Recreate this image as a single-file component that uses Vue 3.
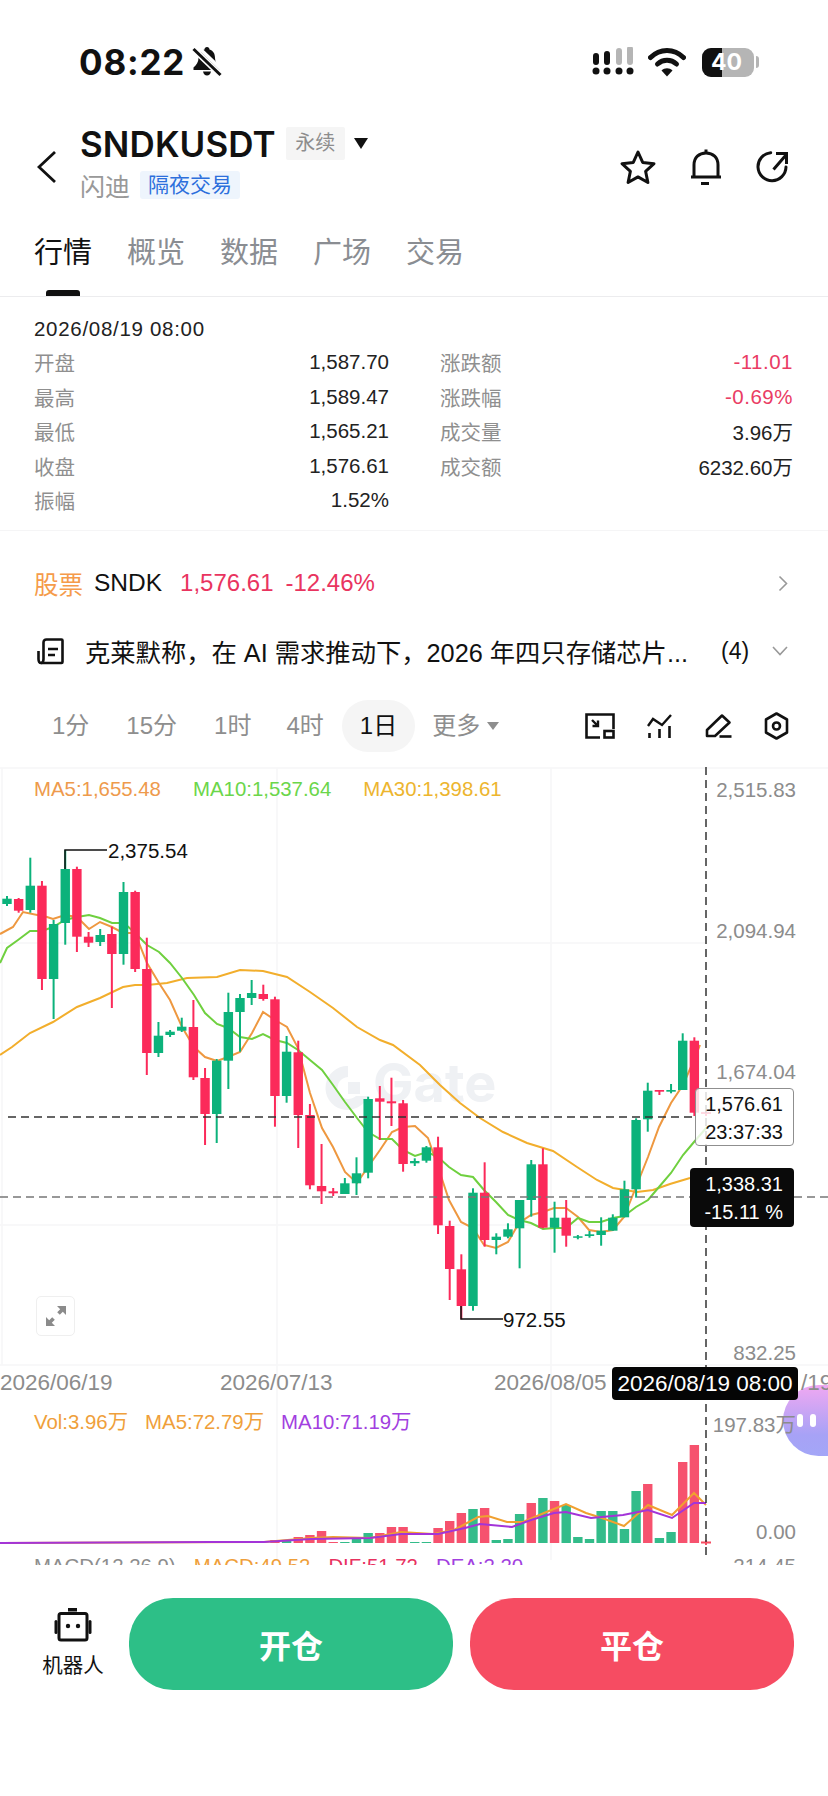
<template>
  <div class="page">
    <!-- status bar -->
    <div class="status-bar">
      <span class="clock">08:22</span>
      <svg class="mute" width="30" height="30" viewBox="0 0 30 30">
        <path d="M15 0c1.500 0 2.500 1 2.500 2.500 4 1.200 5.500 4.500 5.500 8.500 0 4 2 7 5 9.500v2.500H1.500v-2.500c3-2.500 5-5.500 5-9.500 0-4.500 2-7.500 6-8.500C12.500 1 13.500 0 15 0z" fill="#111"/>
        <path d="M11 24.500h8c-.5 2.500-2 4-4 4s-3.500-1.500-4-4z" fill="#111"/>
        <path d="M5 -1l26 25" stroke="#fff" stroke-width="3.500"/>
        <path d="M1.500 2l27 26" stroke="#fff" stroke-width="6"/>
        <path d="M1.500 2l27 26" stroke="#111" stroke-width="3"/>
      </svg>
      <div class="status-right">
        <svg width="44" height="30" viewBox="0 0 44 30">
          <path d="M5 9v6M16 7v8" stroke="#111" stroke-width="6" stroke-linecap="round"/>
          <path d="M28 4v11M39 2v13" stroke="#b5b5b5" stroke-width="6" stroke-linecap="round"/>
          <circle cx="5" cy="24" r="3.500" fill="#111"/><circle cx="16" cy="24" r="3.500" fill="#111"/>
          <circle cx="28" cy="24" r="3.500" fill="#111"/><circle cx="39" cy="24" r="3.500" fill="#111"/>
        </svg>
        <svg width="38" height="30" viewBox="0 0 38 30">
          <path d="M2.500 10.500C12 1 26 1 35.500 10.500" fill="none" stroke="#111" stroke-width="5" stroke-linecap="round"/>
          <path d="M9.500 17c5.500-5 13.500-5 19 0" fill="none" stroke="#111" stroke-width="5" stroke-linecap="round"/>
          <path d="M13.500 23.500c3-3 8-3 11 0L19 29.500z" fill="#111"/>
        </svg>
        <div class="battery">
          <div class="battery-body">
            <div class="battery-fill"></div>
            <span class="battery-num">40</span>
          </div>
          <div class="battery-nub"></div>
        </div>
      </div>
    </div>

    <!-- header -->
    <div class="header">
      <svg class="back" width="20" height="34" viewBox="0 0 20 34">
        <path d="M18 2L2 17l16 15" fill="none" stroke="#111" stroke-width="2.800"/>
      </svg>
      <div class="title-block">
        <div class="title-row">
          <span class="symbol">SNDKUSDT</span>
          <span class="perp-tag">永续</span>
          <span class="caret"></span>
        </div>
        <div class="sub-row">
          <span class="name">闪迪</span>
          <span class="night-tag">隔夜交易</span>
        </div>
      </div>
      <div class="header-icons">
        <svg width="38" height="36" viewBox="0 0 38 36">
          <path d="M19 3l4.700 10.400 11.300 1.300-8.400 7.600 2.300 11.200L19 27.900 9.100 33.500l2.300-11.200L3 14.700l11.300-1.300z" fill="none" stroke="#111" stroke-width="3" stroke-linejoin="round"/>
        </svg>
        <svg width="32" height="38" viewBox="0 0 32 38">
          <path d="M4 29V17C4 9.500 9 5 16 5s12 4.500 12 12v12" fill="none" stroke="#111" stroke-width="3"/>
          <path d="M16 1.500V5M1 29h30M11 35.500h8" stroke="#111" stroke-width="3"/>
        </svg>
        <svg width="34" height="34" viewBox="0 0 34 34">
          <path d="M15.700 2.700A14 14 0 1 0 31 17" fill="none" stroke="#111" stroke-width="3" stroke-linecap="round"/>
          <path d="M18.500 19.500L31 5M21 3.500h10.500V14" fill="none" stroke="#111" stroke-width="3"/>
        </svg>
      </div>
    </div>

    <!-- tabs -->
    <div class="tabs">
      <span v-for="(t, i) in tabs" :key="t" class="tab" :class="{ active: i === 0 }">{{ t }}</span>
    </div>

    <!-- OHLC info -->
    <div class="quote-info">
      <div class="quote-date">2026/08/19 08:00</div>
      <div class="quote-grid">
        <div v-for="row in quoteRows" :key="row.label" class="quote-cell" :class="{ 'is-right': row.right }">
          <span class="quote-label">{{ row.label }}</span>
          <span class="quote-value" :class="{ down: row.down }">{{ row.value }}</span>
        </div>
      </div>
    </div>

    <div class="stock-row">
      <span class="stock-tag">股票</span>
      <span class="stock-code">SNDK</span>
      <span class="stock-num">1,576.61</span>
      <span class="stock-num">-12.46%</span>
      <svg class="stock-arrow" width="10" height="17" viewBox="0 0 10 17">
        <path d="M1.500 1.500l7 7-7 7" fill="none" stroke="#999" stroke-width="1.600"/>
      </svg>
    </div>

    <div class="news-row">
      <svg width="28" height="27" viewBox="0 0 28 27">
        <path d="M6.500 21V4.500c0-1.500 1-3 3-3h15c.5 0 1 .5 1 1V24c0 .5-.5 1-1 1H4" fill="none" stroke="#111" stroke-width="2.600"/>
        <path d="M6.500 21c0 2.500-1 4-2.500 4s-2.500-1.500-2.500-4v-8" fill="none" stroke="#111" stroke-width="2.600"/>
        <path d="M11 11h10M11 17h7" stroke="#111" stroke-width="2.400"/>
      </svg>
      <span class="news-text">克莱默称，在 AI 需求推动下，2026 年四只存储芯片...</span>
      <span class="news-count">(4)</span>
      <svg width="16" height="10" viewBox="0 0 16 10">
        <path d="M1 1l7 7.500L15 1" fill="none" stroke="#999" stroke-width="1.600"/>
      </svg>
    </div>

    <div class="period-row">
      <div class="periods">
        <span v-for="p in periods" :key="p" class="period" :class="{ active: p === '1日' }">{{ p }}</span>
        <span class="period more">更多<i class="more-caret"></i></span>
      </div>
      <div class="tool-icons">
        <svg width="30" height="26" viewBox="0 0 30 26">
          <path d="M28.500 16V1.500H1.500v23H15" fill="none" stroke="#111" stroke-width="2.600"/>
          <rect x="19.500" y="18" width="9" height="6.500" fill="none" stroke="#111" stroke-width="2.600"/>
          <path d="M7 7l6 6M13 7.500V13H7.500" fill="none" stroke="#111" stroke-width="2.400"/>
        </svg>
        <svg width="26" height="26" viewBox="0 0 26 26">
          <path d="M1 13l5-7 9 6 9-10" fill="none" stroke="#111" stroke-width="2.400"/>
          <path d="M2.500 20v5M12.500 16v9M22.500 13v12" fill="none" stroke="#111" stroke-width="2.600"/>
        </svg>
        <svg width="27" height="27" viewBox="0 0 27 27">
          <path d="M2 23v-6L17 2.500l7.500 7L10 23z" fill="none" stroke="#111" stroke-width="2.600" stroke-linejoin="round"/>
          <path d="M14.500 23.500h12" stroke="#111" stroke-width="2.600"/>
        </svg>
        <svg width="25" height="28" viewBox="0 0 25 28">
          <path d="M12.500 1.500l10.500 6v13l-10.500 6-10.500-6v-13z" fill="none" stroke="#111" stroke-width="2.600" stroke-linejoin="round"/>
          <circle cx="12.500" cy="14" r="3.500" fill="none" stroke="#111" stroke-width="2.600"/>
        </svg>
      </div>
    </div>

    <!-- chart -->
    <div class="chart">
      <svg class="chart-canvas" width="828" height="798" viewBox="0 767 828 798">
        <g stroke="#f6f6f7" stroke-width="1.500">
          <path d="M0 768H828M0 943H706M0 1225H706M0 1365H828"/>
          <path d="M2 768V1365M277 768V1560M551 768V1560"/>
        </g>

        <!-- watermark -->
        <g fill="#eff1f4">
          <text x="373" y="1102" font-family="Inter, sans-serif" font-weight="700" font-size="54">Gate</text>
          <path d="M348 1066a22 22 0 1 0 20 30h-12a11 11 0 1 1-8-19z"/>
          <rect x="348" y="1082" width="12" height="12"/>
        </g>

        <polyline :points="ma30" fill="none" stroke="#f2ae2c" stroke-width="2"/>
        <polyline :points="ma5" fill="none" stroke="#ee9840" stroke-width="2"/>
        <polyline :points="ma10" fill="none" stroke="#6fd03f" stroke-width="2"/>

        <g v-for="c in candles" :key="c.x" :fill="c.color">
          <rect :x="c.x - 1" :y="c.wt" width="2" :height="c.wb - c.wt"/>
          <rect :x="c.x - 4.700" :y="c.bt" width="9.400" :height="Math.max(c.bb - c.bt, 1.500)"/>
        </g>
        <path d="M701 1113h10M706 1110v6" stroke="#fb2a5a" stroke-width="2"/>

        <g stroke="#111" stroke-width="1.500" fill="none">
          <path d="M65 869V850H107"/>
          <path d="M461 1306V1319H503"/>
        </g>
        <text x="108" y="858" class="extreme">2,375.54</text>
        <text x="503" y="1327" class="extreme">972.55</text>

        <path d="M8 1117H695" stroke="#333" stroke-width="1.500" stroke-dasharray="8 5"/>
        <path d="M0 1197H690M794 1197H828" stroke="#777" stroke-width="1.500" stroke-dasharray="8 5"/>

        <!-- volume -->
        <rect v-for="b in volBars" :key="'v' + b.x" :x="b.x - 4.700" :y="b.top" width="9.400" :height="1543 - b.top" :fill="b.color"/>
        <path d="M701 1542.500h10M706 1540v5" stroke="#f64c61" stroke-width="2"/>
        <polyline :points="volMa5" fill="none" stroke="#f0a030" stroke-width="2"/>
        <polyline :points="volMa10" fill="none" stroke="#a334d8" stroke-width="2"/>

        <path d="M706 767V1558" stroke="#333" stroke-width="1.500" stroke-dasharray="8 5"/>
      </svg>

      <div class="ma-legend">
        <span class="c-ma5">MA5:1,655.48</span>
        <span class="c-ma10">MA10:1,537.64</span>
        <span class="c-ma30">MA30:1,398.61</span>
      </div>

      <div class="float-ball">
        <i></i><i></i>
      </div>

      <span v-for="a in axisLabels" :key="a.text" class="axis-label" :style="{ top: a.y - 767 + 'px' }">{{ a.text }}</span>
      <span v-for="d in dateLabels" :key="d.text" class="date-label" :style="{ left: d.x + 'px' }">{{ d.text }}</span>

      <div class="price-tag">
        <div>1,576.61</div>
        <div>23:37:33</div>
      </div>
      <div class="cross-tag">
        <div>1,338.31</div>
        <div>-15.11 %</div>
      </div>

      <div class="expand-btn">
        <svg width="22" height="22" viewBox="0 0 22 22">
          <path d="M12 1h9v9l-3.200-3.200-3 3-2.600-2.600 3-3zM10 21H1v-9l3.200 3.200 3-3 2.600 2.600-3 3z" fill="#8b8b8b"/>
        </svg>
      </div>

      <div class="date-tag">2026/08/19 08:00</div>

      <div class="vol-legend">
        <span class="c-vol">Vol:3.96万</span>
        <span class="c-vol">MA5:72.79万</span>
        <span class="c-vol10">MA10:71.19万</span>
      </div>
      <div class="macd-legend">
        <span class="c-gray">MACD(12,26,9)</span>
        <span class="c-vol">MACD:49.52</span>
        <span class="c-dif">DIF:51.72</span>
        <span class="c-vol10">DEA:2.20</span>
      </div>
    </div>

    <!-- bottom actions -->
    <div class="actions">
      <div class="robot">
        <svg width="38" height="34" viewBox="0 0 38 34">
          <rect x="14" y="0" width="9" height="3.500" fill="#111"/>
          <rect x="5" y="5.500" width="28" height="26.500" rx="2" fill="none" stroke="#111" stroke-width="3"/>
          <rect x="0.500" y="12" width="3" height="14" rx="1.500" fill="#111"/>
          <rect x="34.500" y="12" width="3" height="14" rx="1.500" fill="#111"/>
          <circle cx="14" cy="18" r="2.200" fill="#111"/><circle cx="24" cy="18" r="2.200" fill="#111"/>
        </svg>
        <span>机器人</span>
      </div>
      <button class="act-btn open">开仓</button>
      <button class="act-btn close">平仓</button>
    </div>
  </div>
</template>

<script setup>
const tabs = ['行情', '概览', '数据', '广场', '交易']
const periods = ['1分', '15分', '1时', '4时', '1日']

const quoteRows = [
  { label: '开盘', value: '1,587.70' },
  { label: '涨跌额', value: '-11.01', down: true, right: true },
  { label: '最高', value: '1,589.47' },
  { label: '涨跌幅', value: '-0.69%', down: true, right: true },
  { label: '最低', value: '1,565.21' },
  { label: '成交量', value: '3.96万', right: true },
  { label: '收盘', value: '1,576.61' },
  { label: '成交额', value: '6232.60万', right: true },
  { label: '振幅', value: '1.52%' }
]

const axisLabels = [
  { text: '2,515.83', y: 790 },
  { text: '2,094.94', y: 931 },
  { text: '1,674.04', y: 1072 },
  { text: '832.25', y: 1353 },
  { text: '197.83万', y: 1423 },
  { text: '0.00', y: 1532 },
  { text: '214.45', y: 1566 }
]

const dateLabels = [
  { text: '2026/06/19', x: 0 },
  { text: '2026/07/13', x: 220 },
  { text: '2026/08/05', x: 494 },
  { text: '/19', x: 801 }
]

const RED = '#fb2a5a'
const GREEN = '#0cb27b'

// wick top, body top, body bottom, wick bottom, colour (page y values)
const rawCandles = [
  [896, 898.7, 904, 906, 'g'], [898, 899, 910.7, 912.7, 'r'], [857.7, 885.7, 910, 912.7, 'g'],
  [881, 885.7, 979, 990, 'r'], [920, 924, 979, 1019, 'g'], [850, 869, 923, 944.7, 'g'],
  [866.7, 869, 936.7, 952, 'r'], [932, 936.7, 942.7, 947, 'r'], [929, 935, 942, 946, 'g'],
  [926.7, 934, 954, 1008, 'r'], [882, 892, 954, 964.7, 'g'], [890.7, 892, 969, 972, 'r'],
  [937.7, 969, 1053, 1075, 'r'], [1022, 1035.7, 1053, 1057, 'g'], [1030, 1031.7, 1035, 1037, 'g'],
  [1017.7, 1026.7, 1030.7, 1032, 'g'], [1000, 1027, 1077.3, 1080, 'r'], [1068, 1078, 1114, 1145, 'r'],
  [1059, 1060.7, 1114, 1143, 'g'], [992.7, 1012, 1060.7, 1089, 'g'], [994, 998, 1012, 1051.7, 'g'],
  [980, 993, 998, 1005, 'g'], [984.7, 994, 999, 1000.7, 'r'], [996.7, 999.3, 1096, 1126.7, 'r'],
  [1036, 1051.7, 1096, 1102.7, 'g'], [1040.7, 1052.3, 1115, 1148, 'r'], [1104, 1115, 1185.3, 1189.3, 'r'],
  [1144, 1186, 1191.3, 1204, 'r'], [1188, 1191.3, 1193.3, 1196, 'r'], [1178, 1183.3, 1194, 1194, 'g'],
  [1157.3, 1173.3, 1183.3, 1195, 'g'], [1096.7, 1099, 1172.7, 1178.3, 'g'], [1086, 1098.3, 1101.7, 1140, 'r'],
  [1077.7, 1101.3, 1103.3, 1126, 'r'], [1100, 1103.3, 1164, 1171.7, 'r'], [1158.3, 1161, 1163.3, 1166, 'g'],
  [1146, 1147.3, 1160.7, 1162.7, 'g'], [1136.7, 1147.3, 1225.3, 1234, 'r'], [1220.7, 1226, 1269, 1300, 'r'],
  [1254.3, 1269.3, 1306, 1319.3, 'r'], [1188.3, 1192.7, 1306, 1310.7, 'g'], [1162.3, 1192.7, 1240, 1246.7, 'r'],
  [1233.3, 1236.7, 1240, 1254.3, 'g'], [1223.3, 1229.3, 1236.7, 1238.3, 'g'], [1200, 1200, 1228.3, 1268.3, 'g'],
  [1160, 1164.3, 1200, 1216.7, 'g'], [1148.3, 1164.3, 1227.7, 1228.3, 'r'], [1201.7, 1217.7, 1227.7, 1252.7, 'g'],
  [1200, 1217.7, 1235.7, 1246.7, 'r'], [1235, 1236.3, 1237.7, 1239.3, 'g'], [1231, 1234.3, 1236, 1237.7, 'g'],
  [1217.3, 1230.7, 1235, 1245.7, 'g'], [1214.3, 1217.7, 1230.7, 1230.7, 'g'], [1180.7, 1189.3, 1217.3, 1217.3, 'g'],
  [1118.3, 1120, 1189.3, 1197.7, 'g'], [1082.7, 1090.7, 1119.3, 1131.7, 'g'], [1090, 1090, 1091.7, 1095, 'r'],
  [1084, 1090, 1091.7, 1093.3, 'g'], [1033.3, 1040.7, 1090, 1090, 'g'], [1037.3, 1040.7, 1112.7, 1116, 'r']
]

const xAt = i => 7 + i * 11.65

const candles = rawCandles.map((c, i) => ({
  x: xAt(i), wt: c[0], bt: c[1], bb: c[2], wb: c[3],
  color: c[4] === 'r' ? RED : GREEN
}))

// bar top by candle index, starting at index 23
const volTops = [
  1540, 1541, 1537, 1535, 1531, 1542, 1542, 1538, 1533, 1533, 1527, 1527, 1542, 1542, 1528, 1521, 1513, 1509, 1508,
  1540, 1539, 1514, 1503, 1498, 1501, 1505, 1537, 1539, 1511, 1511, 1529, 1491, 1484, 1538, 1532, 1462, 1445
]
const volColors = 'rgrrrrgggrrrggrrrgrgggrgrgggggggrggr'.padEnd(37, 'r')
const volBars = volTops.map((top, i) => ({
  x: xAt(i + 23),
  top,
  color: volColors[i] === 'r' ? '#f6526e' : '#33bc8a'
}))

const ma5 = '0,934 13,927 23,912 47,917 53,919 65,915 77,917 89,929 100,922 112,927 123,933 135,933 147,963 159,983 170,1000 182,1027 194,1047 205,1057 217,1061 228,1057 240,1052 252,1033 263,1012 275,1020 287,1027 298,1048 302,1063 310,1093 322,1128 333,1147 345,1172 357,1183 368,1167 380,1150 392,1132 403,1127 415,1126 428,1138 438,1167 449,1200 461,1222 473,1228 484,1245 496,1248 508,1242 519,1223 531,1215 543,1212 554,1208 566,1208 578,1217 589,1230 601,1232 613,1230 624,1217 636,1187 648,1157 659,1127 671,1103 683,1085 694,1060 700,1045'
const ma10 = '0,963 7,948 18,940 30,931 42,931 53,927 65,920 77,917 89,915 100,918 112,923 124,923 135,933 147,945 159,952 170,963 182,978 194,995 205,1013 217,1024 228,1028 240,1037 252,1039 263,1034 275,1040 287,1043 298,1050 310,1060 322,1070 333,1085 345,1102 357,1118 368,1132 380,1139 392,1139 403,1150 415,1156 427,1152 438,1157 449,1167 461,1175 473,1177 484,1190 496,1202 508,1215 519,1220 531,1223 543,1229 554,1228 566,1228 578,1218 589,1222 601,1222 613,1218 624,1216 636,1207 648,1200 659,1187 671,1173 683,1155 694,1142 707,1127'
const ma30 = '0,1055 12,1047 30,1033 53,1022 77,1007 100,998 123,987 135,985 147,985 167,983 187,978 217,977 240,970 263,971 287,977 310,992 333,1008 357,1027 380,1040 393,1045 420,1065 440,1085 460,1103 480,1118 503,1132 527,1143 553,1151 577,1167 597,1180 613,1188 637,1192 653,1190 670,1184 690,1178 706,1172'
const volMa5 = '0,1543 264,1542 311,1538 333,1537 370,1538 401,1532 433,1534 454,1530 478,1517 488,1516 507,1522 523,1522 544,1513 566,1504 586,1513 602,1518 624,1526 648,1505 672,1515 694,1493 706,1505'
const volMa10 = '0,1543 211,1542 264,1542 311,1539 370,1538 401,1534 438,1534 465,1528 480,1524 512,1527 531,1520 554,1513 566,1512 591,1518 623,1515 648,1510 672,1518 694,1503 706,1503'
</script>

<style>
html, body { margin: 0; background: #fff; }
</style>

<style scoped>
.page {
  width: 828px;
  height: 1796px;
  display: flex;
  flex-direction: column;
  overflow: hidden;
  background: #fff;
  color: #111;
  font-family: "Liberation Sans", "Noto Sans CJK SC", sans-serif;
}

/* status bar */
.status-bar {
  height: 124px;
  flex: none;
  display: flex;
  align-items: center;
  padding: 0 69px 0 79px;
  box-sizing: border-box;
}
.clock {
  font-family: Inter, sans-serif;
  font-weight: 700;
  font-size: 35px;
  letter-spacing: 0.8px;
}
.mute { margin-left: 7px; }
.status-right {
  margin-left: auto;
  display: flex;
  align-items: center;
  gap: 13px;
}
.battery { display: flex; align-items: center; gap: 2px; margin-left: 3px; }
.battery-body {
  position: relative;
  width: 52px;
  height: 29px;
  border-radius: 9px;
  background: #b5b5b5;
  overflow: hidden;
  display: flex;
  align-items: center;
  justify-content: center;
}
.battery-fill { position: absolute; left: 0; top: 0; bottom: 0; width: 20px; background: #111; }
.battery-num {
  position: relative;
  color: #fff;
  font-weight: 700;
  font-size: 23px;
  font-family: Inter, sans-serif;
  margin-right: 3px;
}
.battery-nub { width: 3px; height: 12px; background: #b5b5b5; border-radius: 0 3px 3px 0; }

/* header */
.header {
  height: 78px;
  flex: none;
  display: flex;
  align-items: center;
  padding: 0 39px 0 37px;
  box-sizing: border-box;
}
.back { margin-top: 8px; }
.title-block { margin-left: 23px; }
.title-row { display: flex; align-items: center; height: 36px; margin-top: -1px; }
.symbol { font-family: Inter, sans-serif; font-weight: 600; font-size: 35px; letter-spacing: 0.1px; }
.perp-tag {
  margin-left: 10px;
  width: 59px;
  height: 33px;
  line-height: 33px;
  text-align: center;
  background: #f5f5f5;
  color: #8d8d8d;
  font-size: 20px;
  border-radius: 2px;
}
.caret {
  margin-left: 9px;
  width: 0;
  height: 0;
  border-left: 7.500px solid transparent;
  border-right: 7.500px solid transparent;
  border-top: 11px solid #111;
}
.sub-row { display: flex; align-items: center; margin-top: 8px; height: 30px; }
.name { font-size: 25px; color: #999; }
.night-tag {
  margin-left: 10px;
  height: 28px;
  line-height: 28px;
  padding: 0 8px;
  background: #eef5fd;
  color: #2c6fdc;
  font-size: 21px;
  border-radius: 3px;
}
.header-icons {
  margin-left: auto;
  margin-top: 8px;
  display: flex;
  align-items: center;
  gap: 33px;
}

/* tabs */
.tabs {
  height: 95px;
  flex: none;
  display: flex;
  gap: 35px;
  padding-left: 34px;
  box-sizing: border-box;
  border-bottom: 1.500px solid #ececee;
}
.tab {
  position: relative;
  font-size: 29px;
  line-height: 44px;
  margin-top: 29px;
  color: #8a8d92;
  height: 65px;
}
.tab.active { color: #111; }
.tab.active::after {
  content: "";
  position: absolute;
  left: 12px;
  right: 12px;
  bottom: 0;
  height: 6px;
  border-radius: 3px 3px 0 0;
  background: #111;
}

/* OHLC */
.quote-info {
  height: 234px;
  flex: none;
  padding: 19px 35px 0 34px;
  box-sizing: border-box;
  border-bottom: 1.500px solid #f5f5f6;
}
.quote-date { font-size: 20.500px; line-height: 26px; color: #222; letter-spacing: 0.700px; }
.quote-grid {
  margin-top: 3px;
  display: grid;
  grid-template-columns: 355px 353px;
  column-gap: 51px;
  grid-auto-rows: 34.500px;
}
.quote-cell { display: flex; justify-content: space-between; align-items: center; font-size: 20.500px; }
.quote-label { color: #8f8f8f; }
.quote-value { color: #222; }
.quote-value.down { color: #ea3c64; letter-spacing: 0.500px; }

.stock-row {
  height: 40px;
  margin-top: 32px;
  flex: none;
  display: flex;
  align-items: center;
  padding: 0 40px 0 34px;
  font-size: 24.500px;
}
.stock-tag { color: #f59b4a; }
.stock-code { margin-left: 11px; }
.stock-num { color: #e9345f; margin-left: 18px; font-size: 24px; }
.stock-num + .stock-num { margin-left: 12px; }
.stock-arrow { margin-left: auto; }

.news-row {
  height: 40px;
  margin-top: 28px;
  flex: none;
  display: flex;
  align-items: center;
  padding: 0 39px 0 37px;
  box-sizing: border-box;
}
.news-text { margin-left: 20px; width: 615px; font-size: 25.300px; white-space: nowrap; }
.news-count { margin-left: 21px; font-size: 23px; width: 51px; }

.period-row {
  height: 52px;
  margin-top: 29px;
  flex: none;
  display: flex;
  align-items: center;
  padding: 0 39px 0 34px;
  box-sizing: border-box;
}
.periods { display: flex; align-items: center; }
.period { color: #8e8e8e; font-size: 24px; padding: 0 18px; line-height: 52px; white-space: nowrap; }
.period:nth-child(2) { padding: 0 18px 0 19px; }
.period:nth-child(3) { padding: 0 17px 0 19px; }
.period.active { color: #111; background: #f5f5f5; border-radius: 26px; }
.period.more { padding: 0 0 0 17px; display: flex; align-items: center; }
.more-caret {
  margin-left: 7px;
  width: 0;
  height: 0;
  border-left: 6px solid transparent;
  border-right: 6px solid transparent;
  border-top: 8px solid #8e8e8e;
}
.tool-icons { margin-left: auto; display: flex; align-items: center; gap: 32px; }

/* chart */
.chart {
  position: relative;
  margin-top: 15px;
  height: 798px;
  flex: none;
  overflow: hidden;
}
.chart-canvas { position: absolute; left: 0; top: 0; }
.extreme { font-family: "Liberation Sans", sans-serif; font-size: 20.500px; fill: #111; }
.ma-legend, .vol-legend, .macd-legend {
  position: relative;
  display: flex;
  font-size: 20.400px;
  line-height: 24px;
  padding-left: 34px;
}
.ma-legend { margin-top: 10px; gap: 32px; }
.vol-legend { margin-top: 609px; gap: 17px; }
.macd-legend { margin-top: 119.500px; gap: 18px; }
.c-ma5 { color: #ee9a4c; }
.c-ma10 { color: #6bd64a; }
.c-ma30 { color: #edb52e; }
.c-vol { color: #ef9f3b; }
.c-vol10 { color: #a23fe0; }
.c-dif { color: #e8315f; }
.c-gray { color: #8d8d8d; }

.axis-label {
  position: absolute;
  right: 32px;
  transform: translateY(-50%);
  font-size: 20.500px;
  color: #8c8c8c;
  white-space: nowrap;
}
.date-label {
  position: absolute;
  top: 603px;
  font-size: 22.500px;
  line-height: 26px;
  color: #8c8c8c;
}
.price-tag, .cross-tag {
  position: absolute;
  left: 695px;
  box-sizing: border-box;
  text-align: right;
  font-size: 20px;
  line-height: 28px;
  padding-right: 11px;
}
.price-tag {
  top: 321px;
  width: 99px;
  height: 58px;
  border: 1px solid #8f8f8f;
  border-radius: 4px;
  background: rgba(255, 255, 255, 0.82);
  color: #111;
  padding-top: 1px;
  padding-right: 10px;
}
.cross-tag {
  left: 690px;
  top: 401px;
  width: 104px;
  height: 59px;
  border-radius: 4px;
  background: #0a0a0a;
  color: #fff;
  padding-top: 2px;
}
.expand-btn {
  position: absolute;
  left: 36px;
  top: 529px;
  width: 39px;
  height: 40px;
  box-sizing: border-box;
  border: 1px solid #efefef;
  border-radius: 5px;
  display: flex;
  align-items: center;
  justify-content: center;
  background: #fff;
}
.float-ball {
  position: absolute;
  right: 0;
  top: 618px;
  width: 45px;
  height: 71px;
  border-radius: 36px 0 0 36px;
  background: linear-gradient(180deg, #f0a8f2 0%, #a7a2f6 70%, #a3a6f7 100%);
  display: flex;
  align-items: center;
  justify-content: center;
  gap: 5px;
}
.float-ball i {
  width: 6px;
  height: 13px;
  border-radius: 3px;
  background: #fff;
  margin-left: 2px;
}
.date-tag {
  position: absolute;
  left: 612px;
  top: 600px;
  width: 186px;
  height: 33px;
  line-height: 33px;
  border-radius: 4px;
  background: #050505;
  color: #fff;
  font-size: 22.500px;
  text-align: center;
  white-space: nowrap;
}

/* bottom */
.actions {
  flex: none;
  display: flex;
  align-items: flex-start;
  padding: 33px 0 0 34px;
  gap: 17px;
}
.robot {
  width: 78px;
  display: flex;
  flex-direction: column;
  align-items: center;
  font-size: 20.500px;
  margin-top: 10px;
  line-height: 26px;
  gap: 11px;
}
.act-btn {
  width: 324px;
  height: 92px;
  border: none;
  border-radius: 44px;
  color: #fff;
  font-size: 32px;
  font-weight: 700;
  font-family: "Noto Sans CJK SC", sans-serif;
}
.act-btn.open { background: #2dbf87; }
.act-btn.close { background: #f64c62; }
</style>
